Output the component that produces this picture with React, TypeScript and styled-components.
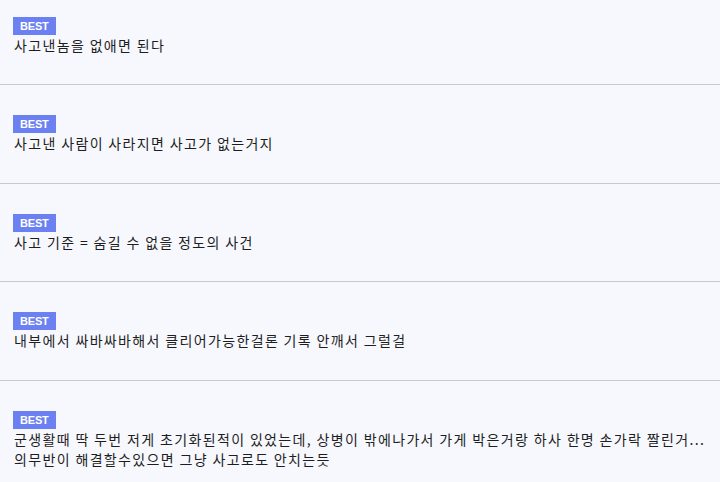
import styled, { createGlobalStyle } from 'styled-components';

const GlobalStyle = createGlobalStyle`
  html, body {
    margin: 0;
    padding: 0;
    background: #f6f8fd;
  }
  body {
    font-family: "Noto Sans CJK KR", "Noto Sans", sans-serif;
    color: #222;
  }
`;

const Page = styled.div`
  width: 720px;
  height: 482px;
  overflow: hidden;
  background: #f6f8fd;
`;

// list is scrolled a little, so the first row starts above the top edge
const CommentList = styled.ul`
  list-style: none;
  margin: -13.5px 0 0;
  padding: 0;
`;

const CommentItem = styled.li`
  display: flex;
  flex-direction: column;
  align-items: flex-start;
  padding: 30px 0 29.5px 14px;
  border-bottom: 1px solid #c8c9cc;
`;

const BestBadge = styled.span`
  display: block;
  height: 18px;
  padding: 0 7px;
  margin-left: -1px;
  background: #6b80f1;
  color: #fff;
  font-family: "Liberation Sans", Arial, sans-serif;
  font-size: 11px;
  font-weight: 700;
  line-height: 18px;
  letter-spacing: -0.2px;
`;

const CommentText = styled.p`
  margin: 0;
  width: 100%;
  font-size: 14px;
  line-height: 20px;
  letter-spacing: 1.35px;
  color: #1e1e1e;
`;

const TextLine = styled.span`
  display: block;
  white-space: nowrap;
  overflow: hidden;
`;

const comments: string[][] = [
  ['사고낸놈을 없애면 된다'],
  ['사고낸 사람이 사라지면 사고가 없는거지'],
  ['사고 기준 = 숨길 수 없을 정도의 사건'],
  ['내부에서 싸바싸바해서 클리어가능한걸론 기록 안깨서 그럴걸'],
  [
    '군생활때 딱 두번 저게 초기화된적이 있었는데, 상병이 밖에나가서 가게 박은거랑 하사 한명 손가락 짤린거...',
    '의무반이 해결할수있으면 그냥 사고로도 안치는듯',
  ],
];

const App = () => {
  return (
    <Page>
      <GlobalStyle />
      <CommentList>
        {comments.map((lines, i) => (
          <CommentItem key={i}>
            <BestBadge>BEST</BestBadge>
            <CommentText>
              {lines.map((line, j) => (
                <TextLine key={j}>{line}</TextLine>
              ))}
            </CommentText>
          </CommentItem>
        ))}
      </CommentList>
    </Page>
  );
};

export default App;
